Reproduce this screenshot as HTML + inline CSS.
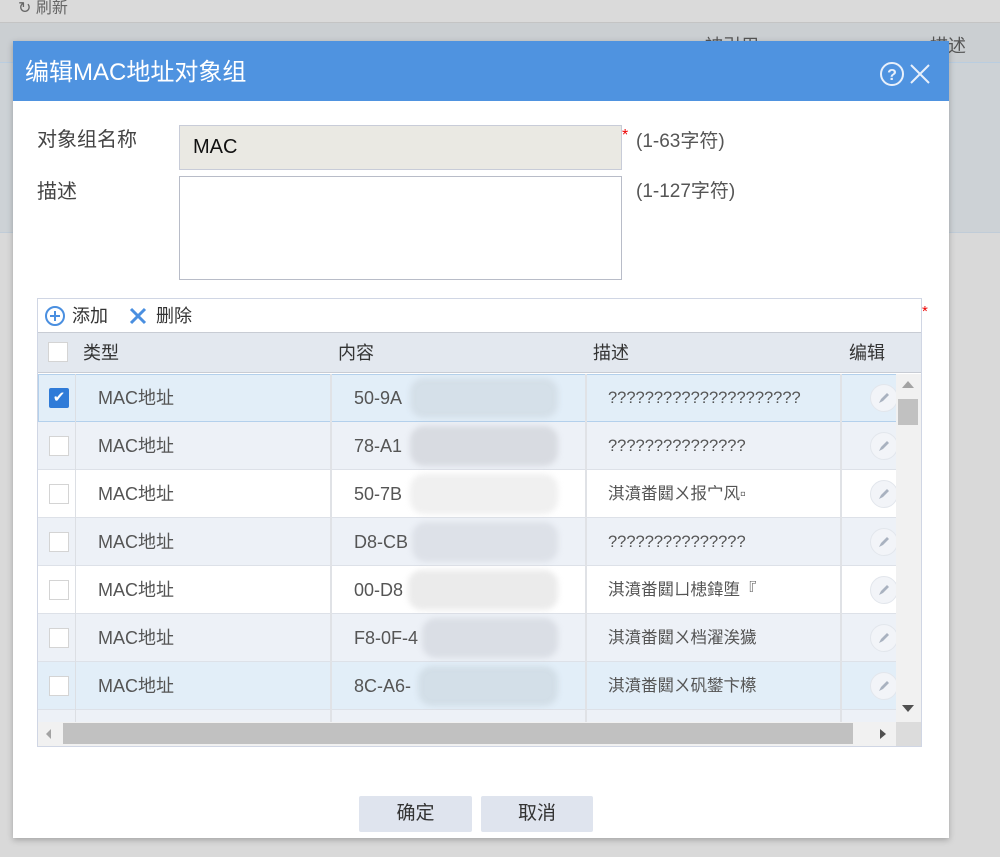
<!DOCTYPE html>
<html><head><meta charset="utf-8"><style>
*{box-sizing:border-box;margin:0;padding:0}
body{width:1000px;height:857px;position:relative;overflow:hidden;background:#d9d9d9;font-family:"Liberation Sans","Noto Sans CJK SC",sans-serif;color:#333}
.a{position:absolute}
.cb{position:absolute;width:20px;height:20px;border:1px solid #d4d4d4;background:#fff}
.txt{position:absolute;font-size:18px;color:#555;white-space:nowrap;line-height:48px;height:48px}
</style></head><body>
<div class="a" style="left:0;top:0;width:1000px;height:23px;background:#dadada;border-bottom:1px solid #c4c4c4"></div>
<div class="a" style="left:18px;top:-6px;font-size:16px;color:#666">&#x21bb; 刷新</div>
<div class="a" style="left:0;top:23px;width:1000px;height:39px;background:#cbcfd2"></div>
<div class="a" style="left:0;top:62px;width:1000px;height:171px;background:#cdd2d6;border-top:1px solid #b9cde0;border-bottom:1px solid #c0ccd8"></div>
<div class="a" style="left:930px;top:32px;font-size:18px;color:#555">描述</div>
<div class="a" style="left:705px;top:32px;font-size:18px;color:#555">被引用</div>

<div class="a" style="left:13px;top:41px;width:936px;height:797px;background:#fff;box-shadow:0 2px 6px rgba(0,0,0,.25)">
 <div class="a" style="left:0;top:0;width:936px;height:60px;background:#4f93e0"></div>
 <div class="a" style="left:12px;top:2px;height:60px;font-size:24px;line-height:60px;color:#fff">编辑MAC地址对象组</div>
 <svg class="a" style="left:866px;top:20px" width="60" height="28"><circle cx="13" cy="13" r="11" fill="none" stroke="#e8f0fb" stroke-width="2"/><text x="13" y="19" font-size="16" font-weight="bold" fill="#e8f0fb" text-anchor="middle" font-family="Liberation Sans">?</text><path d="M32 4 L50 22 M50 4 L32 22" stroke="#e8f0fb" stroke-width="2"/></svg>

 <div class="a" style="left:24px;top:82px;font-size:20px;color:#444">对象组名称</div>
 <div class="a" style="left:166px;top:84px;width:443px;height:45px;background:#eae9e3;border:1px solid #c8ccd8"></div>
 <div class="a" style="left:180px;top:84px;font-size:20px;line-height:45px;color:#111">MAC</div>
 <div class="a" style="left:609px;top:86px;font-size:16px;color:#e00">*</div>
 <div class="a" style="left:623px;top:85px;font-size:19px;color:#555">(1-63字符)</div>
 <div class="a" style="left:24px;top:134px;font-size:20px;color:#444">描述</div>
 <div class="a" style="left:166px;top:135px;width:443px;height:104px;background:#fff;border:1px solid #b8bcc8"></div>
 <div class="a" style="left:623px;top:135px;font-size:19px;color:#555">(1-127字符)</div>
 <div class="a" style="left:909px;top:262px;font-size:15px;color:#e00">*</div>

 <div class="a" style="left:24px;top:257px;width:885px;height:449px;border:1px solid #d0d6e4;background:#fff;overflow:hidden">
  <svg class="a" style="left:6px;top:6px" width="22" height="22"><circle cx="11" cy="11" r="9" fill="none" stroke="#4a8fe0" stroke-width="2"/><path d="M11 6V16M6 11H16" stroke="#4a8fe0" stroke-width="2"/></svg>
  <div class="a" style="left:34px;top:0;font-size:18px;line-height:34px;color:#333">添加</div>
  <svg class="a" style="left:90px;top:7px" width="20" height="20"><path d="M3 3L17 17M17 3L3 17" stroke="#4a8fe0" stroke-width="3"/></svg>
  <div class="a" style="left:118px;top:0;font-size:18px;line-height:34px;color:#333">删除</div>
  <div class="a" style="left:0;top:33px;width:885px;height:41px;background:#e3e8ef;border-top:1px solid #c8ccd4;border-bottom:1px solid #c8ccd4"></div>
  <div class="cb" style="left:10px;top:43px"></div>
  <div class="a" style="left:45px;top:34px;font-size:18px;line-height:40px;color:#333">类型</div>
  <div class="a" style="left:300px;top:34px;font-size:18px;line-height:40px;color:#333">内容</div>
  <div class="a" style="left:555px;top:34px;font-size:18px;line-height:40px;color:#333">描述</div>
  <div class="a" style="left:811px;top:34px;font-size:18px;line-height:40px;color:#333">编辑</div>
  <div id="rows"></div>
  <div class="a" style="left:858px;top:75px;width:25px;height:348px;background:#f1f1f1"></div>
  <div class="a" style="left:864px;top:82px;width:0;height:0;border-left:6px solid transparent;border-right:6px solid transparent;border-bottom:7px solid #a3a3a3"></div>
  <div class="a" style="left:860px;top:100px;width:20px;height:26px;background:#c1c1c1"></div>
  <div class="a" style="left:864px;top:406px;width:0;height:0;border-left:6px solid transparent;border-right:6px solid transparent;border-top:7px solid #505050"></div>
  <div class="a" style="left:0;top:423px;width:858px;height:25px;background:#f1f1f1"></div>
  <div class="a" style="left:25px;top:424px;width:790px;height:21px;background:#c1c1c1"></div>
  <div class="a" style="left:8px;top:430px;width:0;height:0;border-top:5px solid transparent;border-bottom:5px solid transparent;border-right:5px solid #a3a3a3"></div>
  <div class="a" style="left:842px;top:430px;width:0;height:0;border-top:5px solid transparent;border-bottom:5px solid transparent;border-left:6px solid #505050"></div>
  <div class="a" style="left:858px;top:423px;width:25px;height:25px;background:#dcdcdc"></div>
 </div>

 <div class="a" style="left:346px;top:755px;width:113px;height:36px;background:#dfe4ee;border-radius:2px;font-size:19px;color:#333;text-align:center;line-height:36px">确定</div>
 <div class="a" style="left:468px;top:755px;width:112px;height:36px;background:#dfe4ee;border-radius:2px;font-size:19px;color:#333;text-align:center;line-height:36px">取消</div>
</div>
<script>
var rows=[["50-9A","?????????????????????","#e2eef8",1,"rgba(200,210,218,.5)",372],["78-A1","???????????????","#edf1f7",0,"rgba(195,198,204,.5)",372],["50-7B","淇濆畨閮ㄨ报宀风▫","#fff",0,"rgba(225,225,225,.5)",372],["D8-CB","???????????????","#edf1f7",0,"rgba(205,210,218,.5)",374],["00-D8","淇濆畨閮ㄩ槵鍏堕『","#fff",0,"rgba(215,215,215,.5)",370],["F8-0F-4","淇濆畨閮ㄨ档濯涘獩","#edf1f7",0,"rgba(200,204,212,.5)",384],["8C-A6-","淇濆畨閮ㄨ矾鐢卞櫒","#e2eef8",0,"rgba(195,208,216,.5)",380],["","","#edf1f7",0,"",0]];
var h="";
rows.forEach(function(r,i){var t=75+i*48;var hh=i==7?14:48;
h+='<div class="a" style="left:0;top:'+t+'px;width:858px;height:'+hh+'px;background:'+r[2]+';border-bottom:1px solid '+(i==0?'#b3d0ec':'#dde1e8')+(i==0?';border-top:1px solid #b3d0ec;border-left:1px solid #b3d0ec':'')+'"></div>';
h+='<div class="a" style="left:37px;top:'+t+'px;width:1px;height:'+hh+'px;background:#dcdfe4"></div>';
h+='<div class="a" style="left:292px;top:'+t+'px;width:2px;height:'+hh+'px;background:#e0e2e6"></div>';
h+='<div class="a" style="left:547px;top:'+t+'px;width:2px;height:'+hh+'px;background:#e0e2e6"></div>';
h+='<div class="a" style="left:802px;top:'+t+'px;width:2px;height:'+hh+'px;background:#e0e2e6"></div>';
if(i<7){
if(r[3])h+='<div class="a" style="left:11px;top:'+(t+14)+'px;width:20px;height:20px;background:#2f7bd8;border-radius:2px;color:#fff;font-size:15px;text-align:center;line-height:20px">&#x2714;</div>';
else h+='<div class="cb" style="left:11px;top:'+(t+14)+'px"></div>';
h+='<div class="txt" style="left:60px;top:'+t+'px">MAC地址</div>';
h+='<div class="txt" style="left:316px;top:'+t+'px">'+r[0]+'</div>';
h+='<div class="a" style="left:'+r[5]+'px;top:'+(t+4)+'px;width:'+(520-r[5])+'px;height:40px;background:'+r[4]+';filter:blur(3px);border-radius:14px"></div>';
h+='<div class="txt" style="left:570px;top:'+t+'px;font-size:16.5px">'+r[1]+'</div>';
h+='<div class="a" style="left:832px;top:'+(t+10)+'px;width:28px;height:28px;border-radius:50%;background:#f2f4f8;border:1px solid #e2e6ec"></div>';
h+='<svg class="a" style="left:838px;top:'+(t+16)+'px" width="16" height="16"><path d="M3 13L5 9L11 3L13 5L7 11Z" fill="#a9b2c0"/></svg>';
}});
document.getElementById('rows').innerHTML=h;
</script>
</body></html>
